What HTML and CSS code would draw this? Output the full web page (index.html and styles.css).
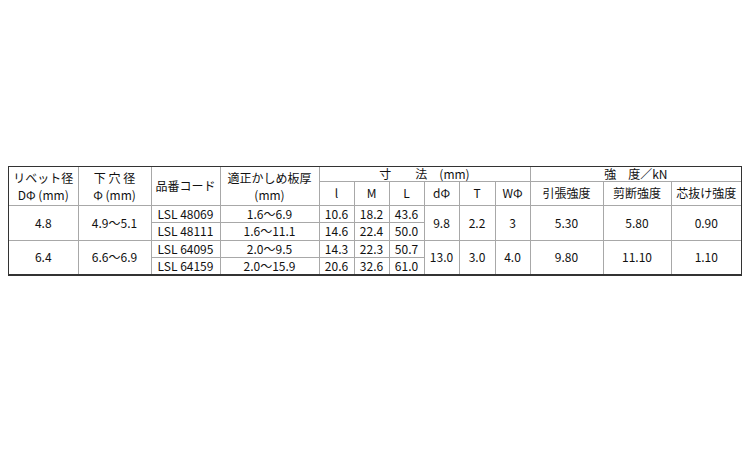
FILE: index.html
```html
<!DOCTYPE html>
<html lang="ja">
<head>
<meta charset="utf-8">
<link rel="stylesheet" href="styles.css">
</head>
<body>
<div class="frame">
<table class="spec">
<colgroup>
<col class="w69"><col class="w73"><col class="w69"><col class="w99">
<col class="w35"><col class="w35"><col class="w35"><col class="w35"><col class="w36"><col class="w35">
<col class="w73"><col class="w68"><col class="w70">
</colgroup>
<tr class="h1">
<td rowspan="2" class="two">リベット径<br>DΦ (mm)</td>
<td rowspan="2" class="two">下 穴 径<br>Φ (mm)</td>
<td rowspan="2">品番コード</td>
<td rowspan="2" class="two">適正かしめ板厚<br>(mm)</td>
<td colspan="6">寸　　法　(mm)</td>
<td colspan="3">強　度／kN</td>
</tr>
<tr class="h2">
<td>l</td><td>M</td><td>L</td><td>dΦ</td><td>T</td><td>WΦ</td>
<td>引張強度</td><td>剪断強度</td><td>芯抜け強度</td>
</tr>
<tr class="r17">
<td rowspan="2">4.8</td><td rowspan="2">4.9～5.1</td><td>LSL 48069</td><td>1.6～6.9</td>
<td>10.6</td><td>18.2</td><td>43.6</td>
<td rowspan="2">9.8</td><td rowspan="2">2.2</td><td rowspan="2">3</td>
<td rowspan="2">5.30</td><td rowspan="2">5.80</td><td rowspan="2">0.90</td>
</tr>
<tr class="r18">
<td>LSL 48111</td><td>1.6～11.1</td><td>14.6</td><td>22.4</td><td>50.0</td>
</tr>
<tr class="r17">
<td rowspan="2">6.4</td><td rowspan="2">6.6～6.9</td><td>LSL 64095</td><td>2.0～9.5</td>
<td>14.3</td><td>22.3</td><td>50.7</td>
<td rowspan="2">13.0</td><td rowspan="2">3.0</td><td rowspan="2">4.0</td>
<td rowspan="2">9.80</td><td rowspan="2">11.10</td><td rowspan="2">1.10</td>
</tr>
<tr class="r17">
<td>LSL 64159</td><td>2.0～15.9</td><td>20.6</td><td>32.6</td><td>61.0</td>
</tr>
</table>
</div>
</body>
</html>
```
FILE: styles.css
```css
html, body {
  margin: 0;
  padding: 0;
  background: #fff;
}
body {
  padding: 166px 0 0 8px;
  font-family: "Noto Sans CJK JP", sans-serif;
  font-size: 12px;
  color: #111;
}
.frame {
  display: inline-block;
  border: 1px solid #333;
  border-bottom-width: 2px;
}
.spec {
  border-collapse: collapse;
  border-style: hidden;
  table-layout: fixed;
  width: 732px;
}
.spec td {
  border: 1px solid #a8a8a8;
  padding: 0;
  text-align: center;
  vertical-align: middle;
  line-height: 12px;
  white-space: nowrap;
}
.spec td.two {
  line-height: 17px;
}
.w69 { width: 69px; }
.w73 { width: 73px; }
.w99 { width: 99px; }
.w35 { width: 35px; }
.w36 { width: 36px; }
.w68 { width: 68px; }
.w70 { width: 70px; }
.h1 { height: 14px; }
.h2 { height: 24px; }
.r17 { height: 17px; }
.r18 { height: 18px; }
```
